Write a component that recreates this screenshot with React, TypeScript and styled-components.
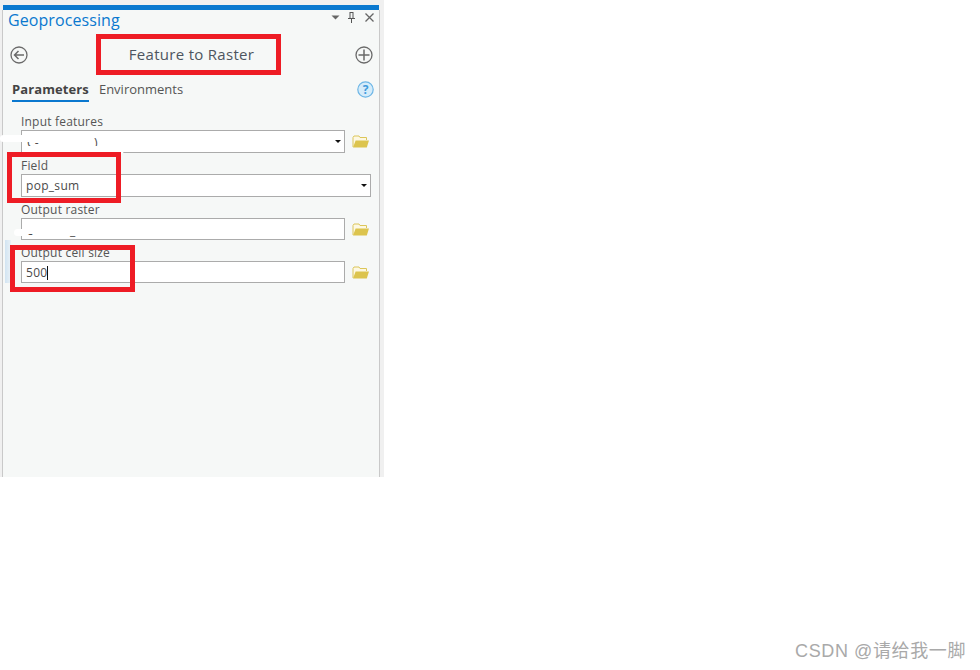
import * as React from "react";
import styled, { createGlobalStyle } from "styled-components";

const GlobalStyle = createGlobalStyle`
  html, body {
    margin: 0;
    padding: 0;
    background: #fff;
  }
`;

const FolderIcon = () => (
  <FolderSvg viewBox="0 0 17 13">
    <path d="M1 12V2.5L2 1h5l1 1.5h6.5V5" fill="#fdf8e2" stroke="#dcc65a" strokeWidth="1" />
    <path d="M1 12.5 3.6 5.5H17L14.8 12.5Z" fill="#dcc44e" />
  </FolderSvg>
);

// the two scraps of text left over where the paths were painted out
const fields = [
  { label: "Input features", value: "", scraps: ["C-", ")"], gap: 55, kind: "select", browse: true },
  { label: "Field", value: "pop_sum", scraps: [], gap: 0, kind: "select", browse: false },
  { label: "Output raster", value: "", scraps: ["c", "_"], gap: 37, kind: "text", browse: true },
  { label: "Output cell size", value: "500", scraps: [], gap: 0, kind: "caret", browse: true }
];

const App: React.FC = () => {
  return (
    <Page>
      <GlobalStyle />
      <Pane>
        <BlueBar />
        <Inner>
          <TitleRow>
            <PaneTitle>Geoprocessing</PaneTitle>
            <WindowIcons>
              <svg width="9" height="5" viewBox="0 0 9 5">
                <path d="M0.5 0.5h8L4.5 4.5Z" fill="#666" />
              </svg>
              <svg width="9" height="11" viewBox="0 0 9 11">
                <path d="M2.5 0.5h4M3 1v5M6 1v5M1 6.5h7M4.5 7v4" stroke="#555" strokeWidth="1" fill="none" />
              </svg>
              <svg width="9" height="9" viewBox="0 0 9 9">
                <path d="M0.5 0.5l8 8M8.5 0.5l-8 8" stroke="#666" strokeWidth="1.3" />
              </svg>
            </WindowIcons>
          </TitleRow>

          <ToolRow>
            <svg width="18" height="18" viewBox="0 0 18 18">
              <circle cx="9" cy="9" r="8" fill="none" stroke="#6a6a6a" strokeWidth="1.3" />
              <path d="M14 9H4.5M8.5 5l-4 4 4 4" fill="none" stroke="#6a6a6a" strokeWidth="1.5" />
            </svg>
            <ToolName>Feature to Raster</ToolName>
            <svg width="18" height="18" viewBox="0 0 18 18">
              <circle cx="9" cy="9" r="8" fill="none" stroke="#6a6a6a" strokeWidth="1.3" />
              <path d="M9 3.5v11M3.5 9h11" fill="none" stroke="#6a6a6a" strokeWidth="1.5" />
            </svg>
          </ToolRow>

          <TabRow>
            <Tab $active>Parameters</Tab>
            <Tab>Environments</Tab>
            <HelpIcon viewBox="0 0 17 17">
              <circle cx="8.5" cy="8.5" r="7.7" fill="#d5ecfa" stroke="#6db6e6" strokeWidth="1.2" />
              <text x="8.5" y="13" textAnchor="middle" fontSize="12" fontWeight="700" fontFamily="Open Sans, sans-serif" fill="#3f9bdc">?</text>
            </HelpIcon>
          </TabRow>

          <Form>
            {fields.map((f, i) => (
              <FieldBlock key={f.label}>
                <FieldLabel>{f.label}</FieldLabel>
                <FieldRow>
                  <InputBox $full={!f.browse} $short={i > 1}>
                    {f.value}
                    {f.kind === "caret" && <Caret />}
                    {f.scraps.length > 0 && (
                      <Scraps $gap={f.gap}>
                        {f.scraps.map(s => (
                          <span key={s}>{s}</span>
                        ))}
                      </Scraps>
                    )}
                    {f.kind === "select" && <DropArrow />}
                  </InputBox>
                  {f.browse && <FolderIcon />}
                </FieldRow>
              </FieldBlock>
            ))}
          </Form>
        </Inner>

        <Smear $left={0} $top={135} $w={60} $h={7} />
        <Smear $left={22} $top={146} $w={102} $h={8} />
        <Smear $left={22} $top={222} $w={70} $h={12} />
        <Smear $left={14} $top={229} $w={14} $h={7} />
        <SideGlow />
        <RedBox $left={96} $top={34} $w={185} $h={41} />
        <RedBox $left={7} $top={152} $w={114} $h={51} />
        <RedBox $left={10} $top={245} $w={125} $h={47} />
      </Pane>
      <Watermark>CSDN @请给我一脚</Watermark>
    </Page>
  );
};

export default App;

const uiFont = `"Open Sans", "Noto Sans", sans-serif`;

const Page = styled.div`
  position: relative;
  width: 980px;
  height: 670px;
  overflow: hidden;
  background: #fff;
`;

const Pane = styled.div`
  position: relative;
  box-sizing: border-box;
  width: 384px;
  height: 477px;
  padding-top: 5px;
  background: #f0f0f0;
`;

const BlueBar = styled.div`
  height: 5px;
  margin: 0 5px 0 3px;
  background: #0a78cf;
`;

const Inner = styled.div`
  box-sizing: border-box;
  height: 467px;
  margin: 0 4px 0 2px;
  border-left: 1px solid #c9c9c9;
  border-right: 1px solid #c9c9c9;
  background: #f6f8f7;
  font-family: ${uiFont};
  color: #4a4a4a;
`;

const TitleRow = styled.div`
  display: flex;
  align-items: center;
  justify-content: space-between;
  box-sizing: border-box;
  height: 21px;
  padding: 0 5px 2px 5px;
`;

const PaneTitle = styled.div`
  font-size: 16px;
  letter-spacing: 0.08px;
  color: #0a78cf;
`;

const WindowIcons = styled.div`
  display: flex;
  align-items: center;
  gap: 6px;
  margin-bottom: 4px;

  svg:nth-child(1) {
    margin-right: 1px;
  }

  svg:nth-child(2) {
    margin-right: 3px;
  }
`;

const ToolRow = styled.div`
  display: flex;
  align-items: center;
  justify-content: space-between;
  height: 48px;
  padding: 0 6px 0 7px;
`;

const ToolName = styled.div`
  font-size: 15px;
  letter-spacing: 0.3px;
  margin-bottom: 2px;
  color: #4d5560;
`;

const TabRow = styled.div`
  display: flex;
  align-items: flex-start;
  gap: 10px;
  height: 28px;
  padding: 0 5px 0 9px;
  font-size: 13px;
`;

const Tab = styled.div<{ $active?: boolean }>`
  box-sizing: border-box;
  height: 23px;
  padding-top: 1px;
  letter-spacing: ${p => (p.$active ? "0.1px" : "0")};
  font-weight: ${p => (p.$active ? 700 : 400)};
  color: ${p => (p.$active ? "#444" : "#555")};
  border-bottom: ${p => (p.$active ? "2px solid #0a78cf" : "none")};
`;

const HelpIcon = styled.svg`
  width: 17px;
  height: 17px;
  margin-left: auto;
  margin-top: 2px;
`;

const Form = styled.div`
  display: flex;
  flex-direction: column;
  padding: 8px 8px 0 18px;
`;

const FieldBlock = styled.div`
  height: 44px;

  &:nth-child(3) {
    height: 43px;
  }
`;

const FieldLabel = styled.div`
  height: 15px;
  line-height: 13px;
  font-size: 12px;
  letter-spacing: 0.2px;
  color: #555;
`;

const FieldRow = styled.div`
  display: flex;
  align-items: center;
  gap: 7px;
`;

const InputBox = styled.div<{ $full?: boolean; $short?: boolean }>`
  position: relative;
  box-sizing: border-box;
  flex: ${p => (p.$full ? 1 : "0 0 324px")};
  height: ${p => (p.$short ? 22 : 23)}px;
  line-height: 21px;
  padding-left: 4px;
  border: 1px solid #ababab;
  background: #fff;
  font-size: 12px;
  letter-spacing: 0.3px;
  color: #4a4a4a;
`;

const Scraps = styled.div<{ $gap: number }>`
  display: flex;
  gap: ${p => p.$gap}px;
  padding: 1px 0 0 1px;
`;

const Caret = styled.span`
  display: inline-block;
  width: 1px;
  height: 14px;
  vertical-align: -3px;
  background: #111;
`;

const DropArrow = styled.span`
  position: absolute;
  right: 3px;
  top: 9px;
  border-left: 3px solid transparent;
  border-right: 3px solid transparent;
  border-top: 3px solid #111;
`;

const FolderSvg = styled.svg`
  width: 17px;
  height: 13px;
`;

const Smear = styled.div<{ $left: number; $top: number; $w: number; $h: number }>`
  position: absolute;
  left: ${p => p.$left}px;
  top: ${p => p.$top}px;
  width: ${p => p.$w}px;
  height: ${p => p.$h}px;
  border-radius: 4px;
  background: #fff;
`;

const SideGlow = styled.div`
  position: absolute;
  left: 5px;
  top: 240px;
  width: 6px;
  height: 43px;
  background: linear-gradient(90deg, #d2e4f2, #eaf2f7);
`;

const RedBox = styled.div<{ $left: number; $top: number; $w: number; $h: number }>`
  position: absolute;
  box-sizing: border-box;
  left: ${p => p.$left}px;
  top: ${p => p.$top}px;
  width: ${p => p.$w}px;
  height: ${p => p.$h}px;
  border: 5px solid #ee1c25;
`;

const Watermark = styled.div`
  position: absolute;
  right: 14px;
  bottom: 7px;
  font-family: "Liberation Sans", "Noto Sans CJK SC", sans-serif;
  font-size: 18px;
  letter-spacing: 0.6px;
  line-height: 24px;
  color: #a9a9a9;
`;
